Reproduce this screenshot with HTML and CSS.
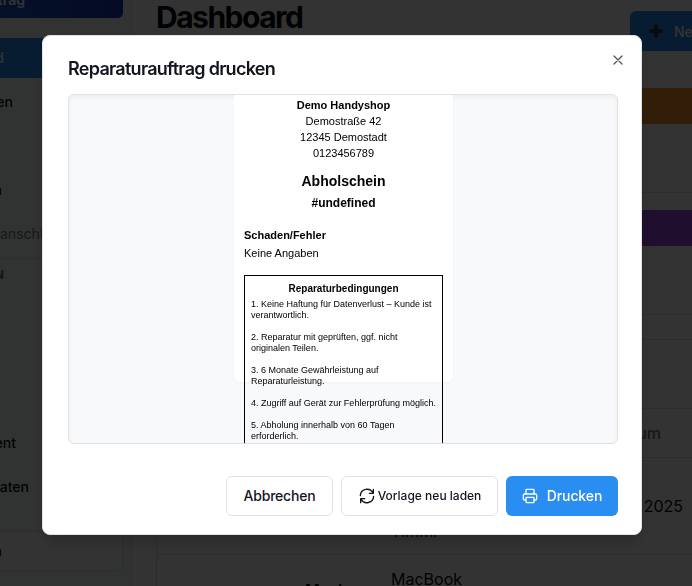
FILE: index.html
```html
<!DOCTYPE html>
<html lang="de">
<head>
<meta charset="utf-8">
<title>Dashboard</title>
<link rel="stylesheet" href="styles.css">
</head>
<body>
<div class="app">
  <aside class="sidebar">
    <div class="new-order">trag</div>
    <nav class="nav">
      <div class="item active">d</div>
      <div class="item end-13">en</div>
      <div class="item"></div>
      <div class="item end-2">n</div>
      <div class="item muted">anschl</div>
    </nav>
    <div class="section">N</div>
    <nav class="nav lower">
      <div class="item end-16">ent</div>
      <div class="item end-29">aten</div>
    </nav>
    <div class="logout">n</div>
  </aside>
  <main class="main">
    <header class="topbar">
      <h1>Dashboard</h1>
      <div class="new-button">
        <svg width="14" height="14" viewBox="0 0 14 14"><path d="M5 .5h4V5h4.500v4H9v4.500H5V9H.5V5H5z" fill="#333"/></svg>
        <span>Neu</span>
      </div>
    </header>
    <section class="stat orange"><div class="band"></div></section>
    <section class="stat purple"><div class="band"></div></section>
    <section class="table">
      <div class="table-title"></div>
      <div class="row head"><span class="date">Datum</span></div>
      <div class="row first"><span class="device">Timmi</span><span class="date">.2025</span></div>
      <div class="row second"><span class="name">Maxi</span><span class="device">MacBook</span></div>
    </section>
  </main>
</div>
<div class="overlay">
  <div class="dialog" role="dialog">
    <svg class="close" width="16" height="16" viewBox="0 0 24 24"><path d="M18 6 6 18M6 6l12 12"/></svg>
    <h2>Reparaturauftrag drucken</h2>
    <div class="preview">
      <article class="receipt">
        <div class="shop"><b>Demo Handyshop</b><br>Demostraße 42<br>12345 Demostadt<br>0123456789</div>
        <div class="kind">Abholschein</div>
        <div class="number">#undefined</div>
        <div class="label">Schaden/Fehler</div>
        <div class="value">Keine Angaben</div>
        <div class="terms">
          <div class="terms-title">Reparaturbedingungen</div>
          <p>1. Keine Haftung für Datenverlust – Kunde ist<br>verantwortlich.</p>
          <p>2. Reparatur mit geprüften, ggf. nicht<br>originalen Teilen.</p>
          <p>3. 6 Monate Gewährleistung auf<br>Reparaturleistung.</p>
          <p>4. Zugriff auf Gerät zur Fehlerprüfung möglich.</p>
          <p>5. Abholung innerhalb von 60 Tagen<br>erforderlich.</p>
        </div>
      </article>
    </div>
    <footer class="actions">
      <button class="btn cancel"><span>Abbrechen</span></button>
      <button class="btn reload">
        <svg width="16" height="16" viewBox="0 0 24 24"><path d="M21.500 2v6h-6M2.500 22v-6h6M2 11.500a10 10 0 0 1 18.800-4.300L21.500 8M22 12.500a10 10 0 0 1-18.800 4.200L2.500 16"/></svg>
        <span>Vorlage neu laden</span>
      </button>
      <button class="btn print">
        <svg width="16" height="16" viewBox="0 0 24 24"><path d="M6 9V3a1 1 0 0 1 1-1h10a1 1 0 0 1 1 1v6M6 18H4a2 2 0 0 1-2-2v-5a2 2 0 0 1 2-2h16a2 2 0 0 1 2 2v5a2 2 0 0 1-2 2h-2"/><rect x="6" y="14" width="12" height="8" rx="1"/></svg>
        <span>Drucken</span>
      </button>
    </footer>
  </div>
</div>
</body>
</html>
```
FILE: styles.css
```css
* { box-sizing: border-box; }
body { margin: 0; height: 586px; overflow: hidden; font-family: Inter, sans-serif; font-size: 14px; color: #080c14; }
h1, h2, p { margin: 0; }

.app { display: grid; grid-template-columns: 132px 560px; height: 586px; overflow: hidden; background: #fff; }
.sidebar { background: #f3fffa; border-right: 1px solid #e0e8e8; overflow: hidden; }
.new-order { width: 123px; height: 18px; padding-right: 98px; display: flex; justify-content: flex-end; line-height: 0; font-weight: 600; color: #fff; background: linear-gradient(90deg, #1e50c8, #163cb8); border-radius: 0 0 5px 0; }
.nav { padding-top: 20px; font-weight: 500; }
.item { display: flex; justify-content: flex-end; align-items: center; width: 123px; height: 40px; margin-bottom: 4px; padding: 0 119px 2px 0; overflow: hidden; }
.item.active { background: #2a8df2; color: #fff; }
.item.end-13 { padding-right: 110px; }
.item.end-2 { padding-right: 121px; }
.item.end-16 { padding-right: 107px; }
.item.end-29 { padding-right: 94px; }
.item.muted { justify-content: flex-start; padding: 0 0 2px; color: #858a88; margin-bottom: 0; letter-spacing: -.1px; }
.section { margin-top: 4px; border-top: 1px solid #dbe4e0; height: 165px; padding-top: 8px; width: 131px; padding-right: 127px; display: flex; justify-content: flex-end; font-size: 12px; line-height: 16px; font-weight: 700; color: #606865; }
.nav.lower { padding: 0; height: 108px; }
.logout { display: flex; justify-content: flex-end; align-items: center; width: 123px; height: 40px; padding: 0 120px 2px 0; border: 1px solid #dbdfe0; border-left: 0; border-radius: 0 6px 6px 0; background: #fff; font-weight: 500; }

.main { padding-left: 24px; background: #fff; }
.topbar { display: flex; justify-content: space-between; height: 63px; }
h1 { margin-top: -1px; font-size: 30px; line-height: 36px; letter-spacing: -1.5px; font-weight: 700; }
.new-button { display: flex; align-items: center; gap: 11px; width: 62px; height: 40px; margin-top: 11px; padding-left: 19px; overflow: hidden; border-radius: 6px 0 0 6px; background: #2a8df2; color: #fff; font-weight: 500; }
.new-button svg { flex: none; }
.stat { height: 130px; margin-bottom: -8px; padding-top: 25px; border-bottom: 1px solid #dcdcdc; }
.band { height: 36px; }
.orange .band { background: #f8932e; }
.purple .band { background: #a046e8; }
.table { margin-top: 32px; border-top: 1px solid #dcdcdc; border-left: 1px solid #dcdcdc; }
.table-title { height: 68px; }
.row { display: grid; grid-template-columns: 148px 86px 212px 1fr; align-items: center; border-top: 1px solid #dcdcdc; font-size: 16px; line-height: 20px; }
.head { height: 49px; font-weight: 500; color: #70747c; }
.first { height: 97px; }
.row .date { grid-column: 4; justify-self: end; padding-right: 9px; }
.row .name { grid-column: 2; padding-top: 25px; font-weight: 600; }
.row .device { grid-column: 3; }
.head .date { padding-right: 31px; }
.first .device { align-self: end; padding-bottom: 13px; }
.second { height: 80px; align-items: start; }
.second .device { padding-top: 14px; }

.overlay { position: fixed; inset: 0; display: flex; padding: 35px 50px 51px 42px; background: rgb(0 0 0 / 80%); }
.dialog { position: relative; width: 600px; height: 500px; padding: 23px 23px 18px 25px; border: 1px solid #e4e2e4; border-radius: 8px; background: #fff; box-shadow: 0 10px 15px -3px rgb(0 0 0 / 20%); }
.close { position: absolute; top: 16px; right: 15px; stroke: #555861; stroke-width: 2; fill: none; stroke-linecap: round; }
h2 { height: 35px; font-size: 18px; line-height: 20px; letter-spacing: -.71px; font-weight: 600; color: #12141f; }
.preview { width: 550px; height: 350px; overflow: hidden; border: 1px solid #e2dfe2; border-radius: 6px; background: #f8f9fb; box-shadow: inset 0 2px 4px rgb(0 0 0 / 5%); }
.receipt { width: 219px; height: 287px; margin: 0 0 0 165px; padding: 2px 10px 0; border-radius: 0 0 6px 6px; background: #fff; box-shadow: 0 1px 2px rgb(0 0 0 / 4%); color: #000; font-family: "Liberation Sans", sans-serif; font-size: 11px; line-height: 16px; }
.shop { text-align: center; }
.kind { margin-top: 10px; text-align: center; font-size: 14px; line-height: 20px; font-weight: 700; }
.number { margin-top: 4px; text-align: center; font-size: 12px; line-height: 16px; font-weight: 700; }
.label { margin-top: 16px; font-weight: 700; }
.value { margin-top: 2px; }
.terms { width: 199px; height: 210px; margin-top: 14px; padding: 7px 6px; border: 1px solid #000; font-size: 9px; line-height: 11px; white-space: nowrap; }
.terms-title { margin-bottom: 4px; text-align: center; font-size: 10px; line-height: 12px; font-weight: 700; }
.terms p { margin-bottom: 11px; }
.actions { display: flex; justify-content: flex-end; gap: 8px; margin-top: 32px; }
.btn { display: flex; align-items: center; justify-content: center; height: 40px; padding: 0; border: 1px solid #e2dfe2; border-radius: 6px; background: #fff; font: 500 14px Inter, sans-serif; color: #12141f; white-space: nowrap; }
.btn span { padding-bottom: 2px; }
.btn svg { fill: none; stroke: currentColor; stroke-width: 2; stroke-linecap: round; stroke-linejoin: round; }
.cancel { width: 107px; letter-spacing: -.2px; }
.reload { width: 157px; gap: 3px; padding-left: 1px; font-size: 12px; }
.print { width: 112px; gap: 9px; border: 0; background: #2a8df2; color: #fff; letter-spacing: -.1px; }
```
